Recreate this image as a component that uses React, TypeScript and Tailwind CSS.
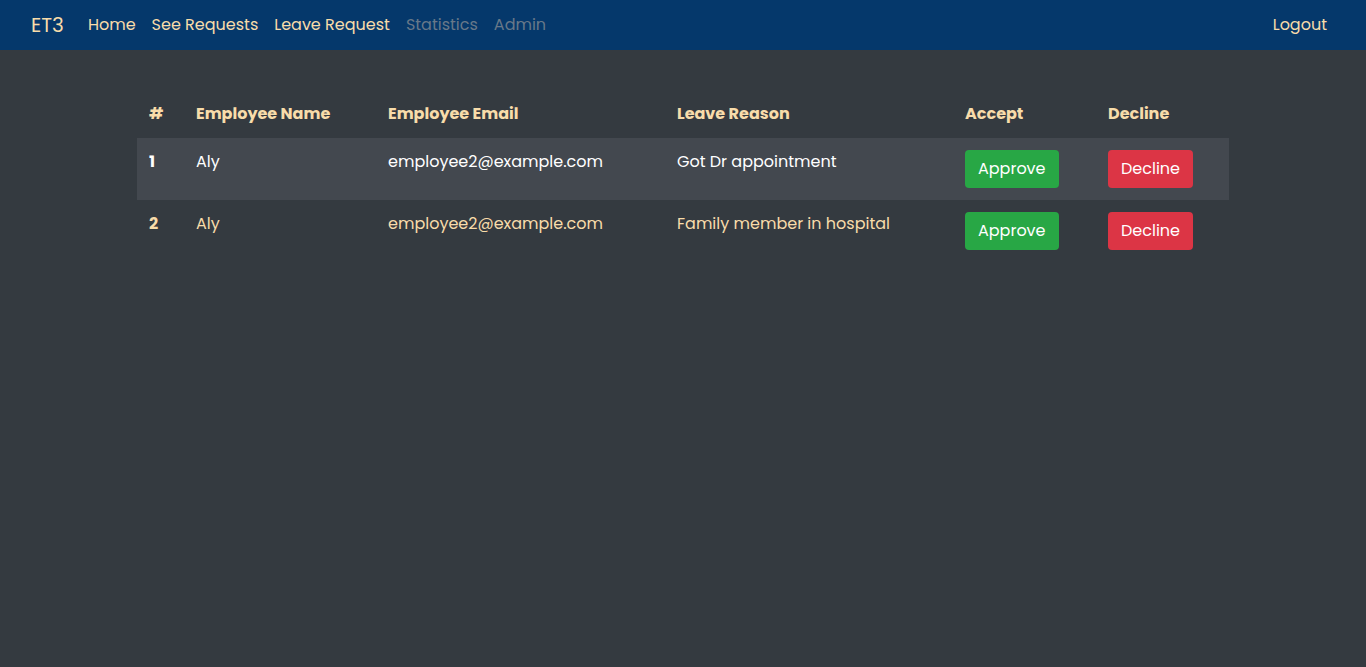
import React from 'react';

interface LeaveRequest {
  id: number;
  name: string;
  email: string;
  reason: string;
}

const requests: LeaveRequest[] = [
  { id: 1, name: 'Aly', email: 'employee2@example.com', reason: 'Got Dr appointment' },
  { id: 2, name: 'Aly', email: 'employee2@example.com', reason: 'Family member in hospital' },
];

export default function App() {
  return (
    <div
      className="min-h-screen bg-[#343a40] text-[16px]"
      style={{ fontFamily: 'Poppins, "DejaVu Sans", sans-serif' }}
    >
      {/* Navbar */}
      <nav className="h-[50px] bg-[#05386b] flex items-center justify-between px-[31px]">
        <div className="flex items-center">
          <span className="text-[20px] text-[#f8dcaa] mr-4 leading-none">ET3</span>
          <a className="px-2 text-[#f8dcaa]">Home</a>
          <a className="px-2 text-[#f8dcaa]">See Requests</a>
          <a className="px-2 text-[#f8dcaa]">Leave Request</a>
          <a className="px-2 text-[#687889]">Statistics</a>
          <a className="px-2 text-[#687889]">Admin</a>
        </div>
        <a className="px-2 text-[#f8dcaa]">Logout</a>
      </nav>

      {/* Requests table */}
      <div className="w-[1092px] mx-auto mt-[40px]">
        <table className="w-full border-collapse text-left">
          <thead>
            <tr className="text-[#f8dcaa] font-bold">
              <th className="w-[47px] px-3 py-3 leading-6">#</th>
              <th className="w-[192px] px-3 py-3 leading-6">Employee Name</th>
              <th className="w-[289px] px-3 py-3 leading-6">Employee Email</th>
              <th className="w-[288px] px-3 py-3 leading-6">Leave Reason</th>
              <th className="w-[143px] px-3 py-3 leading-6">Accept</th>
              <th className="px-3 py-3 leading-6">Decline</th>
            </tr>
          </thead>
          <tbody>
            {requests.map((r, i) => (
              <tr
                key={r.id}
                className={i % 2 === 0 ? 'bg-[#43484f] text-white' : 'text-[#f8dcaa]'}
              >
                <td className="px-3 py-3 align-top leading-6 font-bold">{r.id}</td>
                <td className="px-3 py-3 align-top leading-6">{r.name}</td>
                <td className="px-3 py-3 align-top leading-6">{r.email}</td>
                <td className="px-3 py-3 align-top leading-6">{r.reason}</td>
                <td className="px-3 py-3 align-top">
                  <button className="h-[38px] px-[13px] bg-[#28a745] text-white rounded-[4px] leading-6">
                    Approve
                  </button>
                </td>
                <td className="px-3 py-3 align-top">
                  <button className="h-[38px] px-[13px] bg-[#dc3545] text-white rounded-[4px] leading-6">
                    Decline
                  </button>
                </td>
              </tr>
            ))}
          </tbody>
        </table>
      </div>
    </div>
  );
}
